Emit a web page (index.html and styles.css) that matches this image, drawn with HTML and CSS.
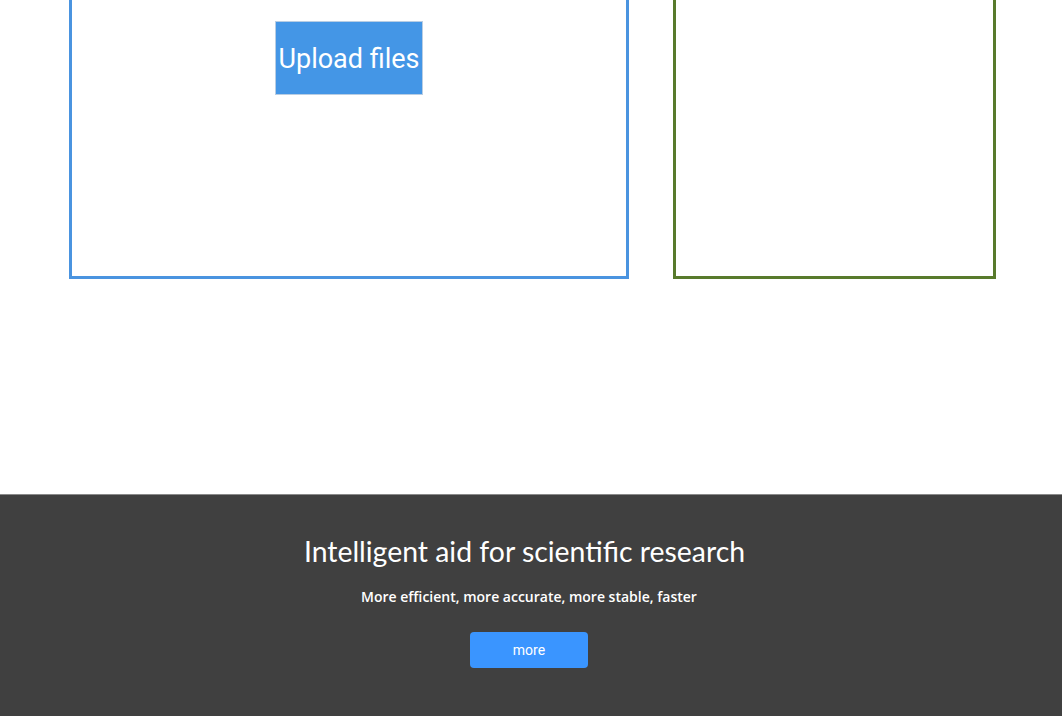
FILE: index.html
```html
<!DOCTYPE html>
<html lang="en">
<head>
    <meta charset="UTF-8">
    <meta name="viewport" content="width=device-width, initial-scale=1.0">
    <title>Research Aid</title>
    <link rel="stylesheet" href="styles.css">
</head>
<body>
    <div class="workspace">
        <div class="upload-box">
            <button class="upload-btn">Upload files</button>
        </div>
        <div class="result-box"></div>
    </div>

    <div class="footer">
        <h2 class="footer-title">Intelligent aid for scientific research</h2>
        <p class="footer-sub">More efficient, more accurate, more stable, faster</p>
        <button class="more-btn">more</button>
    </div>
</body>
</html>
```

FILE: styles.css
```css
body {
    margin: 0;
    padding: 0;
    background-color: #fff;
    font-family: Roboto, "Liberation Sans", sans-serif;
}

.workspace {
    display: flex;
    gap: 44px;
    padding-left: 69px;
    height: 494px;
}

.upload-box {
    box-sizing: border-box;
    width: 560px;
    height: 279px;
    border: 3px solid #4a94e0;
    border-top: none;
    display: flex;
    justify-content: center;
    align-items: flex-start;
}

.result-box {
    box-sizing: border-box;
    width: 323px;
    height: 279px;
    border: 3px solid #587a2c;
    border-top: none;
}

.upload-btn {
    margin-top: 21px;
    width: 148px;
    height: 74px;
    background-color: #4496e6;
    border: 1px solid #b8cde3;
    color: #fff;
    font-family: Roboto, sans-serif;
    font-size: 27px;
    padding: 2px 0 0;
}

.footer {
    height: 222px;
    background-color: #404040;
    border-top: 1px solid #8a8a8a;
    box-sizing: border-box;
    text-align: center;
    color: #fff;
    font-family: "Open Sans", sans-serif;
    padding: 36px 4px 0 0;
}

.footer-title {
    margin: 0;
    padding-right: 9px;
    font-family: Lato, sans-serif;
    font-size: 28.4px;
    font-weight: normal;
    line-height: 40px;
}

.footer-sub {
    margin: 16px 0 0;
    font-size: 14px;
    font-weight: 600;
    line-height: 20px;
}

.more-btn {
    margin-top: 25px;
    width: 118px;
    height: 36px;
    background-color: #3a95ff;
    border: none;
    border-radius: 4px;
    color: #fff;
    font-family: Roboto, sans-serif;
    font-size: 14px;
}
```
